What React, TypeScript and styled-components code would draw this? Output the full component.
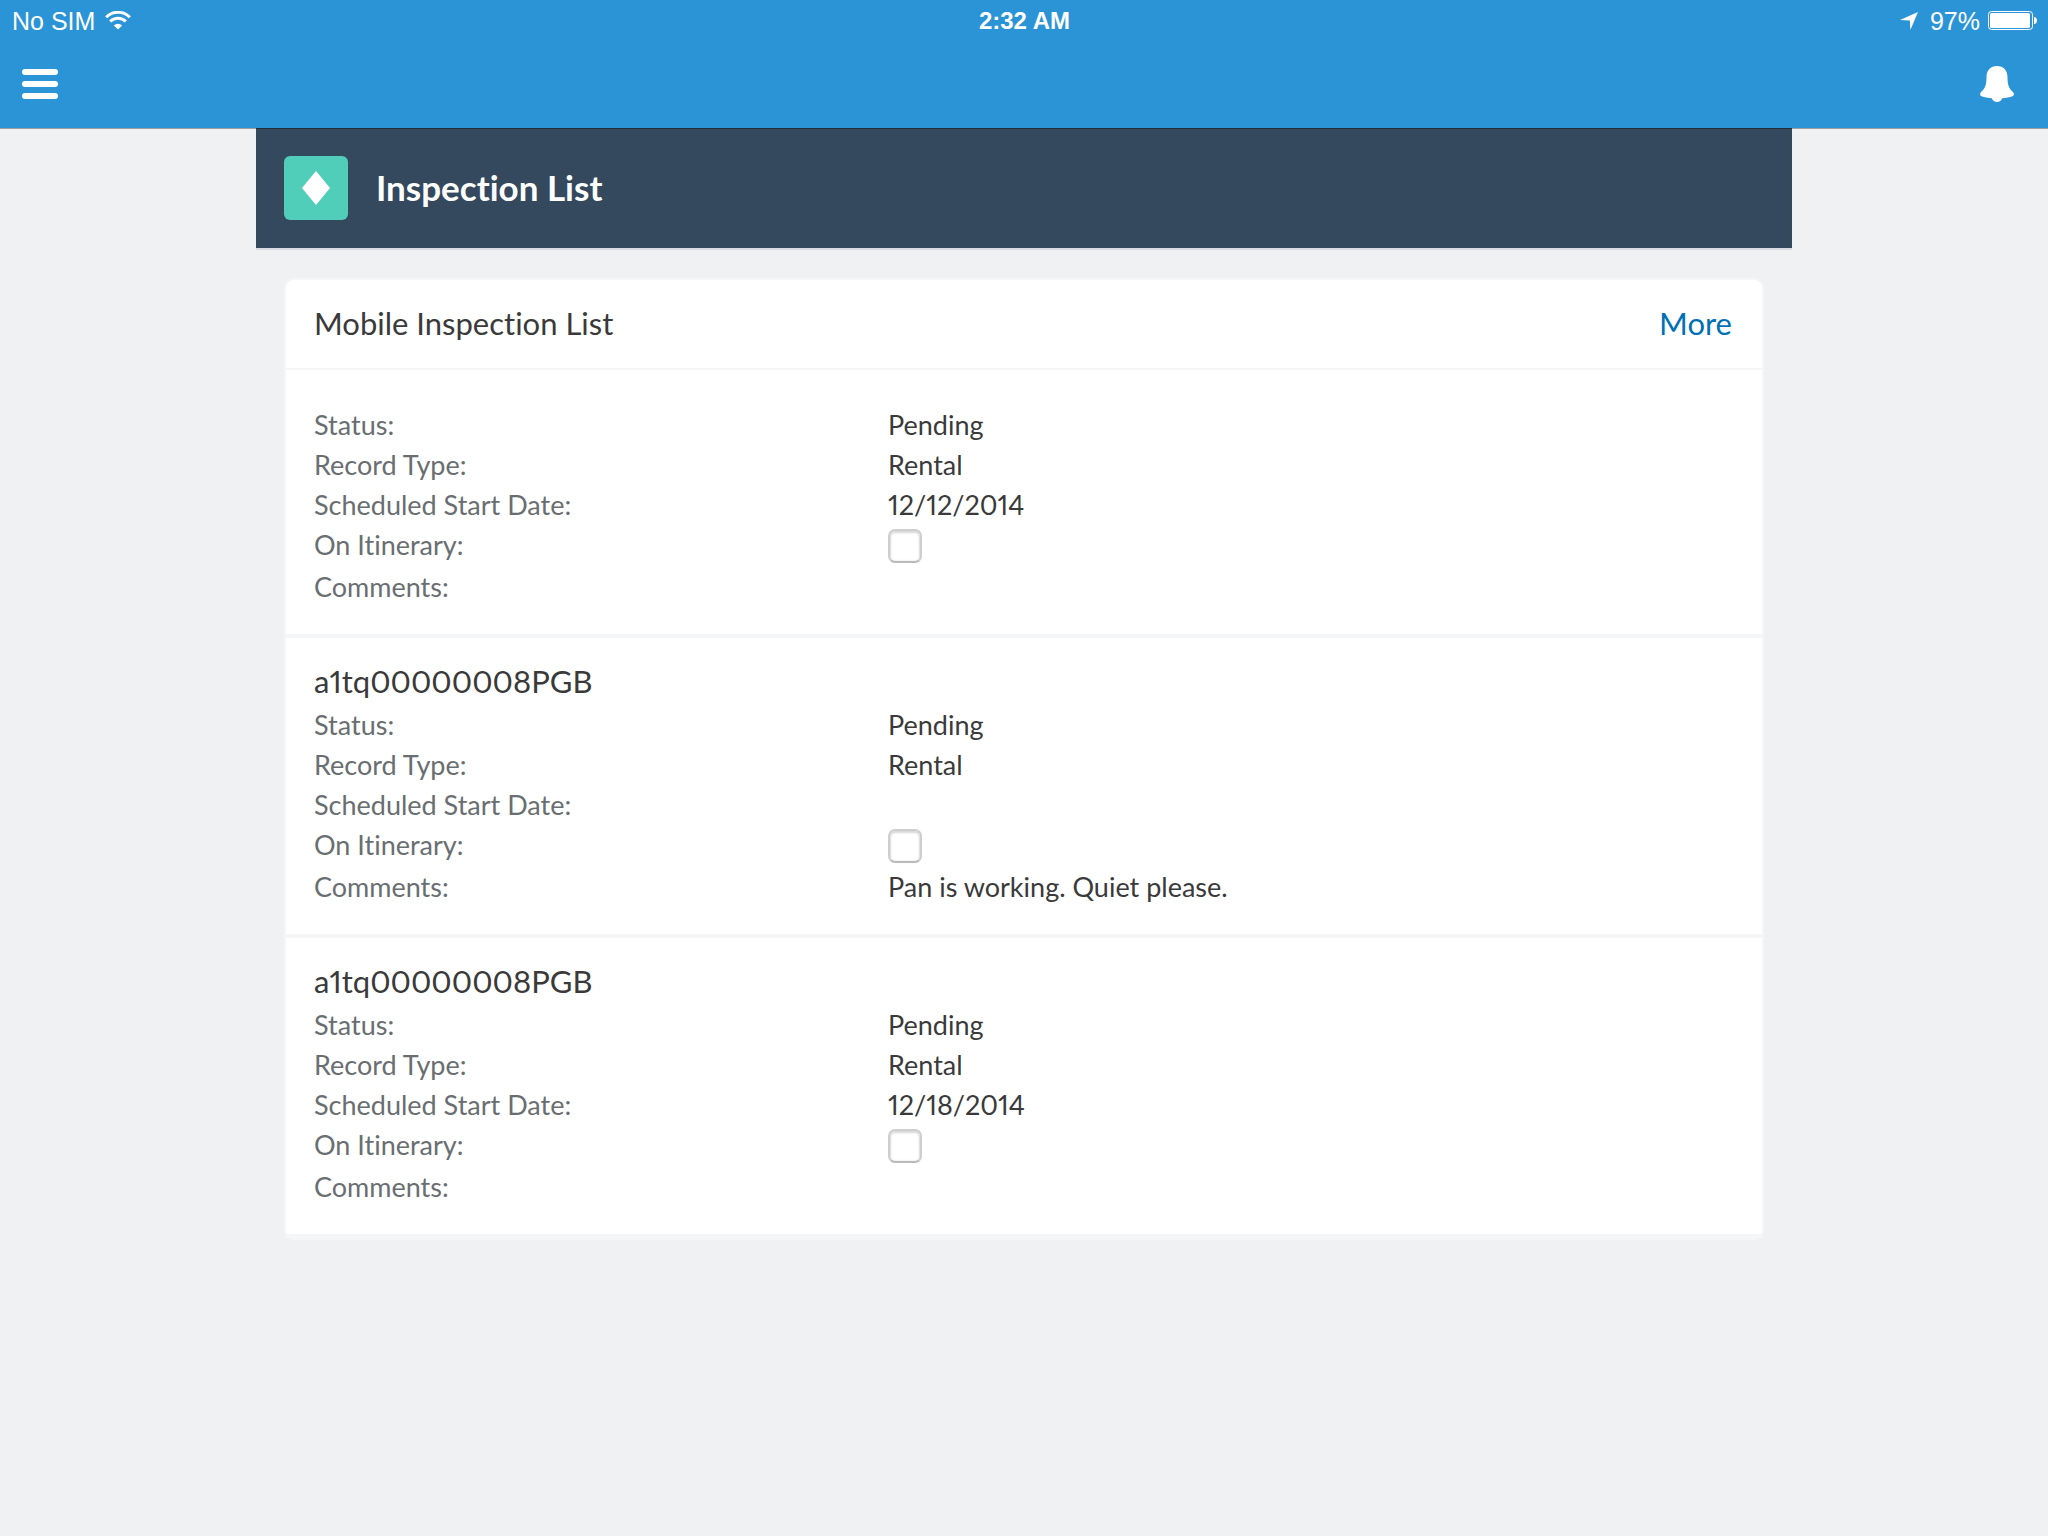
import React, { useId, useState } from "react";
import styled, { createGlobalStyle } from "styled-components";

const uiFont = `Lato, "Noto Sans", sans-serif`;
const systemFont = `"Liberation Sans", Arial, sans-serif`;

const GlobalStyle = createGlobalStyle`
  *, *::before, *::after { box-sizing: border-box; }
  body {
    margin: 0;
    background: #eff1f3;
    color: #3a3a3a;
    font-family: ${uiFont};
    font-variant-ligatures: none;
    font-variant-numeric: proportional-nums;
    -webkit-font-smoothing: antialiased;
  }
`;

const TopBar = styled.header`
  position: relative;
  z-index: 1;
  background: #2a94d6;
  color: #fff;
  box-shadow: 0 1px 0 rgba(0, 0, 0, 0.35);
`;

const StatusBar = styled.div`
  display: grid;
  grid-template-columns: 1fr auto 1fr;
  align-items: center;
  height: 42px;
  padding: 0 11px 0 12px;
  font: 25px/42px ${systemFont};
`;

const StatusGroup = styled.div<{ $end?: boolean }>`
  display: flex;
  align-items: center;
  justify-content: ${(p) => (p.$end ? "flex-end" : "flex-start")};
  gap: ${(p) => (p.$end ? 8 : 10)}px;
`;

const Clock = styled.time`
  font-size: 24px;
  font-weight: 700;
`;

const NavBar = styled.nav`
  display: flex;
  align-items: center;
  justify-content: space-between;
  height: 86px;
  padding: 0 34px 2px 22px;
`;

const IconButton = styled.button`
  display: flex;
  padding: 0;
  border: 0;
  background: none;
  color: inherit;
  cursor: pointer;
`;

const Page = styled.main`
  width: 75%;
  margin: 0 auto;
`;

const PageHeader = styled.div`
  display: flex;
  align-items: center;
  gap: 28px;
  height: 120px;
  padding: 0 28px;
  background: #34495e;
  color: #fff;
  box-shadow: 0 2px 0 #d8dce2;
`;

const ObjectTile = styled.span`
  display: flex;
  align-items: center;
  justify-content: center;
  width: 64px;
  height: 64px;
  border-radius: 6px;
  background: #50ceb9;
`;

const PageTitle = styled.h1`
  margin: 0;
  padding-bottom: 2px;
  font-size: 35px;
  line-height: 40px;
  font-weight: 700;
`;

const Card = styled.section`
  margin: 30px 28px;
  border: 2px solid #f4f6f8;
  border-radius: 10px;
  background: #fff;
`;

const CardHeader = styled.div`
  display: flex;
  align-items: center;
  justify-content: space-between;
  height: 90px;
  padding: 0 30px 2px 28px;
  border-bottom: 2px solid #f4f6f8;
`;

const CardTitle = styled.h2`
  margin: 0;
  font-size: 31px;
  line-height: 40px;
  font-weight: 400;
`;

const MoreLink = styled.a`
  color: #0070b5;
  font-size: 31px;
  line-height: 40px;
  text-decoration: none;
`;

const RecordItem = styled.article`
  padding: 27px 28px;
  border-bottom: 4px solid #f4f6f8;
`;

const RecordTitle = styled.h3`
  margin: 0 0 8px;
  font-size: 31px;
  line-height: 32px;
  font-weight: 400;
`;

const Fields = styled.dl`
  margin: 0;
  font-size: 27px;
  line-height: 40px;
`;

const FieldRow = styled.div`
  display: grid;
  grid-template-columns: 2fr 3fr;
  column-gap: 10px;
  min-height: 40px;
`;

const FieldName = styled.dt`
  color: #696e71;
`;

const FieldValue = styled.dd`
  margin: 0;
`;

const Tick = styled.input`
  appearance: none;
  display: block;
  width: 34px;
  height: 34px;
  margin: 4px 0;
  border: 2px solid #cecece;
  border-bottom-color: #bababa;
  border-radius: 7px;
  background: #fff;
  box-shadow: inset 0 1px 2px 1px #d8d8d8;

  &:checked {
    background: #2a94d6;
  }
`;

type InspectionRecord = {
  name: string;
  status: string;
  recordType: string;
  startDate: string;
  comments: string;
};

const records: InspectionRecord[] = [
  { name: "", status: "Pending", recordType: "Rental", startDate: "12/12/2014", comments: "" },
  {
    name: "a1tq00000008PGB",
    status: "Pending",
    recordType: "Rental",
    startDate: "",
    comments: "Pan is working. Quiet please.",
  },
  { name: "a1tq00000008PGB", status: "Pending", recordType: "Rental", startDate: "12/18/2014", comments: "" },
];

const WifiIcon = () => (
  <svg width="26" height="20" viewBox="0 0 26 20" fill="none" stroke="#fff" strokeWidth="3" aria-hidden="true">
    <path d="M1.2 6.2a16.7 16.7 0 0 1 23.600 0" />
    <path d="M5.2 10.500a11 11 0 0 1 15.600 0" />
    <path d="M13 18.500l-4.200-4.100a6 6 0 0 1 8.400 0z" fill="#fff" stroke="none" />
  </svg>
);

const LocationIcon = () => (
  <svg width="22" height="18" viewBox="0 0 22 18" fill="#fff" aria-hidden="true">
    <path d="M18 0L0 8l9.8.6L10.4 18z" />
  </svg>
);

const BatteryIcon = () => (
  <svg width="49" height="20" viewBox="0 0 49 20" fill="none" aria-hidden="true">
    <rect x="0.5" y="0.5" width="44" height="18" rx="3" stroke="#fff" />
    <rect x="2" y="2" width="40" height="15" rx="1.5" fill="#fff" />
    <path d="M46 6c2 0 3 1.600 3 3.500s-1 3.500-3 3.500z" fill="#fff" />
  </svg>
);

const MenuIcon = () => (
  <svg width="36" height="30" viewBox="0 0 36 30" fill="#fff" aria-hidden="true">
    <rect width="36" height="6" rx="3" />
    <rect y="12" width="36" height="6" rx="3" />
    <rect y="24" width="36" height="6" rx="3" />
  </svg>
);

const BellIcon = () => (
  <svg width="34" height="36" viewBox="0 0 34 36" fill="#fff" aria-hidden="true">
    <path d="M17 0C10.500 0 6.500 4.500 6.500 11C6.500 18 5.500 22 1.500 25.500C-.2 27-.5 29.500 1.500 30.200C4.500 31.300 8 32 11.800 32.300C12.500 34.500 14.500 36 17 36S21.500 34.500 22.200 32.300C26 32 29.500 31.300 32.500 30.200C34.500 29.500 34.200 27 32.500 25.500C28.500 22 27.500 18 27.500 11C27.500 4.500 23.500 0 17 0Z" />
  </svg>
);

const DiamondIcon = () => (
  <svg width="28" height="34" viewBox="0 0 28 34" fill="#fff" aria-hidden="true">
    <path d="M14 0l14 17-14 17L0 17z" />
  </svg>
);

function RecordEntry({ record }: { record: InspectionRecord }) {
  const tickId = useId();
  const [onItinerary, setOnItinerary] = useState(false);

  return (
    <RecordItem>
      <RecordTitle>{record.name}</RecordTitle>
      <Fields>
        <FieldRow>
          <FieldName>Status:</FieldName>
          <FieldValue>{record.status}</FieldValue>
        </FieldRow>
        <FieldRow>
          <FieldName>Record Type:</FieldName>
          <FieldValue>{record.recordType}</FieldValue>
        </FieldRow>
        <FieldRow>
          <FieldName>Scheduled Start Date:</FieldName>
          <FieldValue>{record.startDate}</FieldValue>
        </FieldRow>
        <FieldRow>
          <FieldName>
            <label htmlFor={tickId}>On Itinerary:</label>
          </FieldName>
          <FieldValue>
            <Tick
              id={tickId}
              type="checkbox"
              checked={onItinerary}
              onChange={(e) => setOnItinerary(e.target.checked)}
            />
          </FieldValue>
        </FieldRow>
        <FieldRow>
          <FieldName>Comments:</FieldName>
          <FieldValue>{record.comments}</FieldValue>
        </FieldRow>
      </Fields>
    </RecordItem>
  );
}

export default function App() {
  return (
    <>
      <GlobalStyle />
      <TopBar>
        <StatusBar>
          <StatusGroup>
            <span>No SIM</span>
            <WifiIcon />
          </StatusGroup>
          <Clock>2:32 AM</Clock>
          <StatusGroup $end>
            <LocationIcon />
            <span>97%</span>
            <BatteryIcon />
          </StatusGroup>
        </StatusBar>
        <NavBar>
          <IconButton type="button" aria-label="Menu">
            <MenuIcon />
          </IconButton>
          <IconButton type="button" aria-label="Notifications">
            <BellIcon />
          </IconButton>
        </NavBar>
      </TopBar>
      <Page>
        <PageHeader>
          <ObjectTile>
            <DiamondIcon />
          </ObjectTile>
          <PageTitle>Inspection List</PageTitle>
        </PageHeader>
        <Card>
          <CardHeader>
            <CardTitle>Mobile Inspection List</CardTitle>
            <MoreLink href="#more">More</MoreLink>
          </CardHeader>
          {records.map((record, index) => (
            <RecordEntry key={index} record={record} />
          ))}
        </Card>
      </Page>
    </>
  );
}
